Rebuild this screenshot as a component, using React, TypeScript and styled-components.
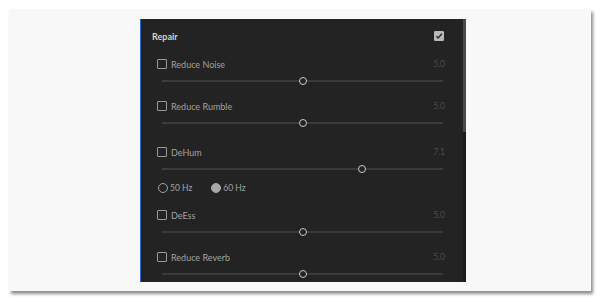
import React from "react";
import styled, { createGlobalStyle } from "styled-components";

const GlobalStyle = createGlobalStyle`
  html, body {
    margin: 0;
    padding: 0;
    background: #ffffff;
    font-family: Lato, "Open Sans", sans-serif;
  }
`;

type Effect = {
  label: string;
  value: number;
  pad: number;
};

const effects: Effect[] = [
  { label: "Reduce Noise", value: 5.0, pad: 0 },
  { label: "Reduce Rumble", value: 5.0, pad: 8 },
  { label: "DeHum", value: 7.1, pad: 12 },
  { label: "DeEss", value: 5.0, pad: 9 },
  { label: "Reduce Reverb", value: 5.0, pad: 8 },
];

const App: React.FC = () => {
  const top = effects.slice(0, 3);
  const bottom = effects.slice(3);

  return (
    <Page>
      <GlobalStyle />
      <Card>
        <Panel>
          <Content>
            <Header>
              <Title>Repair</Title>
              <CheckBox $checked>
                <svg width="8" height="8" viewBox="0 0 8 8">
                  <path d="M1.3 4.2 L3.2 6 L6.8 1.8" fill="none" stroke="#2a2a2a" strokeWidth="1.4" />
                </svg>
              </CheckBox>
            </Header>
            {top.map((e) => (
              <EffectBlock key={e.label} effect={e} />
            ))}
            <RadioRow>
              <RadioOption>
                <Radio />
                <span>50 Hz</span>
              </RadioOption>
              <RadioOption>
                <Radio $selected />
                <span>60 Hz</span>
              </RadioOption>
            </RadioRow>
            {bottom.map((e) => (
              <EffectBlock key={e.label} effect={e} />
            ))}
          </Content>
          <Scrollbar>
            <ScrollThumb />
          </Scrollbar>
        </Panel>
      </Card>
    </Page>
  );
};

const EffectBlock: React.FC<{ effect: Effect }> = ({ effect }) => (
  <Group $pad={effect.pad}>
    <LabelRow>
      <CheckBox />
      <Label>{effect.label}</Label>
      <Value>{effect.value.toFixed(1)}</Value>
    </LabelRow>
    <SliderRow>
      <Track>
        <Thumb style={{ left: `${effect.value * 10}%` }} />
      </Track>
    </SliderRow>
  </Group>
);

export default App;

const Page = styled.div`
  width: 600px;
  height: 302px;
  box-sizing: border-box;
  padding: 9px 9px 0 9px;
  background: #ffffff;
  overflow: hidden;
`;

const Card = styled.div`
  width: 582px;
  height: 282px;
  box-sizing: border-box;
  padding: 10px 0 0 131px;
  background: #f8f8f8;
  box-shadow: 2px 3px 3px rgba(0, 0, 0, 0.45);
`;

const Panel = styled.div`
  width: 326px;
  height: 263px;
  display: flex;
  background: #232323;
  border-left: 1px solid #2b68c9;
  box-sizing: border-box;
  overflow: hidden;
`;

const Content = styled.div`
  flex: 1;
  display: flex;
  flex-direction: column;
`;

const Header = styled.div`
  height: 34px;
  flex-shrink: 0;
  display: flex;
  align-items: center;
  justify-content: space-between;
  padding: 0 19px 0 11px;
`;

const Title = styled.span`
  font-size: 9px;
  font-weight: 700;
  color: #d4d4d4;
`;

const CheckBox = styled.span<{ $checked?: boolean }>`
  width: 10px;
  height: 10px;
  box-sizing: border-box;
  flex-shrink: 0;
  display: flex;
  align-items: center;
  justify-content: center;
  border-radius: 1px;
  border: 1px solid ${(p) => (p.$checked ? "#b8b8b8" : "#9a9a9a")};
  background: ${(p) => (p.$checked ? "#b8b8b8" : "transparent")};
`;

const Group = styled.div<{ $pad: number }>`
  display: flex;
  flex-direction: column;
  flex-shrink: 0;
  padding-top: ${(p) => p.$pad}px;
`;

const LabelRow = styled.div`
  height: 22px;
  display: flex;
  align-items: center;
  padding: 0 18px 0 16px;
`;

const Label = styled.span`
  margin-left: 4px;
  font-size: 9px;
  color: #a2a2a2;
  flex: 1;
`;

const Value = styled.span`
  font-size: 8.5px;
  color: #4c4c4c;
`;

const SliderRow = styled.div`
  height: 12px;
  display: flex;
  align-items: center;
  padding: 0 20px 0 21px;
`;

const Track = styled.div`
  position: relative;
  flex: 1;
  height: 2px;
  background: #3a3a3a;
`;

const Thumb = styled.span`
  position: absolute;
  top: 50%;
  width: 8px;
  height: 8px;
  box-sizing: border-box;
  border-radius: 50%;
  border: 1.5px solid #cacaca;
  background: #232323;
  transform: translate(-50%, -50%);
`;

const RadioRow = styled.div`
  height: 14px;
  margin-top: 6px;
  flex-shrink: 0;
  display: flex;
  align-items: center;
  gap: 19px;
  padding-left: 17px;
`;

const RadioOption = styled.label`
  display: flex;
  align-items: center;
  gap: 2px;
  font-size: 8.5px;
  color: #a2a2a2;
`;

const Radio = styled.span<{ $selected?: boolean }>`
  width: 10px;
  height: 10px;
  box-sizing: border-box;
  border-radius: 50%;
  border: 1.5px solid ${(p) => (p.$selected ? "#a8a8a8" : "#a0a0a0")};
  background: ${(p) => (p.$selected ? "#a8a8a8" : "transparent")};
`;

const Scrollbar = styled.div`
  width: 3px;
  background: #1c1c1c;
  display: flex;
  flex-direction: column;
`;

const ScrollThumb = styled.div`
  height: 113px;
  background: #4a4a4a;
`;
